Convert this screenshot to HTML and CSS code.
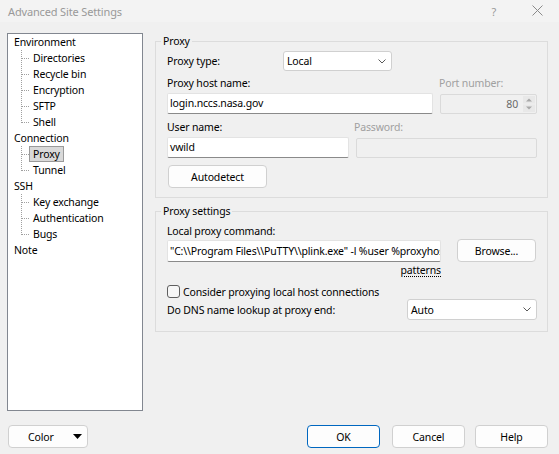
FILE: index.html
```html
<!DOCTYPE html>
<html lang="en">
<head>
    <meta charset="UTF-8">
    <title>Advanced Site Settings</title>
    <link rel="stylesheet" href="styles.css">
</head>
<body>

    <!-- Title bar -->
    <div class="titlebar">
        <span class="title">Advanced Site Settings</span>
        <span class="title-help">?</span>
        <svg class="title-close" width="11" height="11" viewBox="0 0 11 11">
            <path d="M0.5 0.5 L10.5 10.5 M10.5 0.5 L0.5 10.5" stroke="#8a8a8a" stroke-width="1" fill="none"/>
        </svg>
    </div>

    <div class="main">
        <!-- Page tree -->
        <div class="tree">
            <div class="node">Environment</div>
            <div class="node child">Directories</div>
            <div class="node child">Recycle bin</div>
            <div class="node child">Encryption</div>
            <div class="node child">SFTP</div>
            <div class="node child last">Shell</div>
            <div class="node">Connection</div>
            <div class="node child"><span class="selected">Proxy</span></div>
            <div class="node child last">Tunnel</div>
            <div class="node">SSH</div>
            <div class="node child">Key exchange</div>
            <div class="node child">Authentication</div>
            <div class="node child last">Bugs</div>
            <div class="node">Note</div>
        </div>

        <div class="panel">
            <!-- Proxy -->
            <fieldset class="group">
                <legend>Proxy</legend>

                <div class="row row-type">
                    <span class="label-type">Proxy type:</span>
                    <div class="combo combo-type">
                        <span>Local</span>
                        <svg width="8" height="5" viewBox="0 0 8 5"><path d="M0.5 0.5 L4 4 L7.5 0.5" stroke="#5a5a5a" fill="none"/></svg>
                    </div>
                </div>

                <div class="row labels">
                    <span class="label-host">Proxy host name:</span>
                    <span class="disabled-text">Port number:</span>
                </div>
                <div class="row fields">
                    <div class="edit edit-host">login.nccs.nasa.gov</div>
                    <div class="edit disabled edit-port">
                        <span class="port-value">80</span>
                        <svg class="spinner" width="12" height="16" viewBox="0 0 12 16">
                            <rect x="0" y="0" width="12" height="7.5" fill="#e8e8e8"/>
                            <rect x="0" y="8.5" width="12" height="7.5" fill="#e8e8e8"/>
                            <path d="M3 5.5 L6 2.5 L9 5.5 Z" fill="#a8a8a8"/>
                            <path d="M3 10.5 L6 13.5 L9 10.5 Z" fill="#a8a8a8"/>
                        </svg>
                    </div>
                </div>

                <div class="row labels">
                    <span class="label-user">User name:</span>
                    <span class="disabled-text">Password:</span>
                </div>
                <div class="row fields">
                    <div class="edit edit-user">vwild</div>
                    <div class="edit disabled edit-pass"></div>
                </div>

                <div class="row">
                    <button class="btn btn-detect">Autodetect</button>
                </div>
            </fieldset>

            <!-- Proxy settings -->
            <fieldset class="group group-settings">
                <legend>Proxy settings</legend>

                <div class="row labels labels-cmd">
                    <span>Local proxy command:</span>
                </div>
                <div class="row fields">
                    <div class="edit edit-cmd">"C:\\Program Files\\PuTTY\\plink.exe" -l %user %proxyhost</div>
                    <button class="btn btn-browse">Browse...</button>
                </div>
                <div class="row patterns-row">
                    <span class="patterns">patterns</span>
                </div>

                <div class="row check-row">
                    <span class="checkbox"></span>
                    <span class="check-label">Consider proxying local host connections</span>
                </div>

                <div class="row row-dns">
                    <span>Do DNS name lookup at proxy end:</span>
                    <div class="combo combo-dns">
                        <span>Auto</span>
                        <svg width="8" height="5" viewBox="0 0 8 5"><path d="M0.5 0.5 L4 4 L7.5 0.5" stroke="#5a5a5a" fill="none"/></svg>
                    </div>
                </div>
            </fieldset>
        </div>
    </div>

    <!-- Dialog buttons -->
    <div class="footer">
        <button class="btn btn-color">
            <span>Color</span>
            <svg width="9" height="5" viewBox="0 0 9 5"><path d="M0 0 L9 0 L4.5 5 Z" fill="#000"/></svg>
        </button>
        <button class="btn btn-dialog btn-ok">OK</button>
        <button class="btn btn-dialog btn-cancel">Cancel</button>
        <button class="btn btn-dialog btn-help">Help</button>
    </div>

</body>
</html>
```

FILE: styles.css
```css
/* Dialog base */
body {
    margin: 0;
    width: 559px;
    height: 454px;
    overflow: hidden;
    background-color: #f0f0f0;
    font-family: "Noto Sans", "Open Sans", sans-serif;
    font-size: 10.5px;
    letter-spacing: -0.15px;
    color: #000;
}

/* Title bar */
.titlebar {
    height: 22px;
    display: flex;
    align-items: center;
    background-color: #f3f3f3;
    color: #999;
    font-size: 11px;
}

.title {
    padding-left: 8px;
}

.title-help {
    margin-left: auto;
}

.title-close {
    margin-left: 36px;
    margin-right: 16px;
    margin-top: -1px;
}

/* Main area */
.main {
    display: flex;
    margin-top: 11px;
    padding-left: 7px;
}

/* Tree */
.tree {
    box-sizing: border-box;
    width: 136px;
    height: 378px;
    background: #fff;
    border: 1px solid #828790;
}

.node {
    height: 16px;
    line-height: 16px;
    padding-left: 6px;
    white-space: nowrap;
}

.node.child {
    padding-left: 25px;
    background-image:
        repeating-linear-gradient(to bottom, #a0a0a0 0 1px, transparent 1px 2px),
        repeating-linear-gradient(to right, #a0a0a0 0 1px, transparent 1px 2px);
    background-size: 1px 16px, 8px 1px;
    background-position: 13px 0, 14px 8px;
    background-repeat: no-repeat;
}

.node.child.last {
    background-size: 1px 9px, 8px 1px;
}

.selected {
    display: inline-block;
    box-sizing: border-box;
    height: 16px;
    line-height: 14px;
    margin-left: -4px;
    padding: 0 3px;
    background: #d9d9d9;
    border: 1px solid #9a9a9a;
}

/* Right panel */
.panel {
    margin-left: 12px;
    width: 393px;
}

.group {
    box-sizing: border-box;
    width: 393px;
    margin: 0;
    padding: 0 10px 9px 11px;
    border: 1px solid #dcdcdc;
}

.group legend {
    padding: 0 2px;
    margin-left: -6px;
    line-height: 16px;
}

.group-settings {
    margin-top: 5px;
    padding-bottom: 11px;
}

.row {
    display: flex;
}

.row-type {
    align-items: center;
    margin-top: 2px;
}

.label-type {
    width: 116px;
}

.labels {
    height: 16px;
    line-height: 16px;
    margin-top: 4px;
}

.labels + .fields {
    margin-top: 2px;
}

.fields + .labels {
    margin-top: 5px;
}

.fields {
    align-items: flex-end;
}

.label-host {
    width: 272px;
}

.label-user {
    width: 187px;
}

.disabled-text {
    color: #a0a0a0;
}

/* Combo boxes */
.combo {
    box-sizing: border-box;
    height: 20px;
    display: flex;
    align-items: center;
    justify-content: space-between;
    padding: 0 5px 0 3px;
    background: #fff;
    border: 1px solid #d0d0d0;
    border-radius: 3px;
}

.combo-type {
    width: 109px;
}

.combo-dns {
    width: 130px;
    height: 21px;
    margin-left: auto;
}

/* Edit boxes */
.edit {
    box-sizing: border-box;
    height: 21px;
    line-height: 19px;
    padding-left: 2px;
    background: #fff;
    border: 1px solid #e3e3e3;
    border-bottom-color: #8a8a8a;
    border-radius: 2px;
    white-space: nowrap;
    overflow: hidden;
}

.edit.disabled {
    height: 20px;
    background: #f0f0f0;
    border-color: #dadada;
    margin-left: 7px;
}

.edit-host {
    width: 266px;
}

.edit-port {
    width: 97px;
    display: flex;
    align-items: center;
    justify-content: flex-end;
    padding-right: 1px;
}

.port-value {
    color: #6a6a6a;
    margin-right: 5px;
}

.spinner {
    display: block;
}

.edit-user {
    width: 182px;
}

.edit-pass {
    width: 181px;
}

.edit-cmd {
    width: 274px;
    height: 22px;
    line-height: 20px;
}

/* Buttons */
.btn {
    box-sizing: border-box;
    height: 23px;
    padding: 0;
    font-family: inherit;
    font-size: inherit;
    letter-spacing: inherit;
    color: #000;
    background: #fdfdfd;
    border: 1px solid #d0d0d0;
    border-radius: 4px;
}

.btn-detect {
    width: 99px;
    margin-top: 7px;
    margin-left: 1px;
}

.btn-browse {
    width: 79px;
    margin-left: 16px;
}

.labels-cmd {
    margin-top: 4px;
}

.labels-cmd + .fields {
    margin-top: 0;
}

.patterns-row {
    width: 274px;
    height: 16px;
    line-height: 16px;
    justify-content: flex-end;
}

.patterns {
    text-decoration: underline dotted;
    text-underline-offset: 2px;
}

/* Checkbox */
.check-row {
    height: 15px;
    margin-top: 6px;
    align-items: center;
}

.checkbox {
    box-sizing: border-box;
    width: 13px;
    height: 13px;
    background: #f7f7f7;
    border: 1px solid #5f5f5f;
    border-radius: 3px;
}

.check-label {
    margin-left: 3px;
}

.row-dns {
    align-items: center;
}

/* Footer */
.footer {
    display: flex;
    margin-top: 14px;
    padding: 0 11px 0 8px;
}

.btn-color {
    width: 80px;
    display: flex;
    align-items: center;
    padding: 0 5px 0 19px;
    justify-content: space-between;
}

.btn-dialog {
    width: 73px;
}

.btn-ok {
    margin-left: auto;
    border-color: #0067c0;
}

.btn-cancel {
    margin-left: 12px;
}

.btn-help {
    margin-left: 10px;
}
```
